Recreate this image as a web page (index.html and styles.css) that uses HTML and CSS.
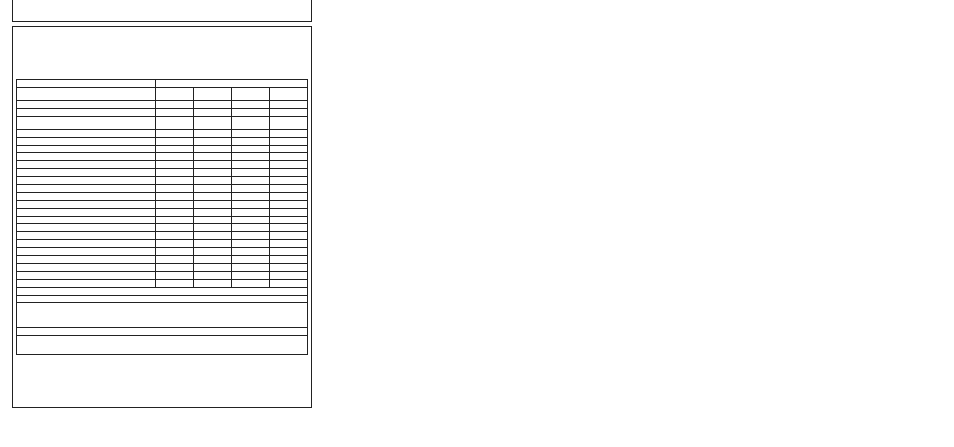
FILE: index.html
```html
<!DOCTYPE html>
<html lang="en">
<head>
<meta charset="utf-8">
<title>Form</title>
<link rel="stylesheet" href="styles.css">
</head>
<body>
<div class="page">
  <div class="box box-top"></div>
  <div class="box box-main">
    <table class="grid">
      <colgroup>
        <col class="c-label">
        <col class="c-val"><col class="c-val"><col class="c-val"><col class="c-val">
      </colgroup>
      <tr class="r-h1"><td></td><td colspan="4"></td></tr>
      <tr class="r-h2"><td></td><td></td><td></td><td></td><td></td></tr>
      <tr class="r-d"><td></td><td></td><td></td><td></td><td></td></tr>
      <tr class="r-d"><td></td><td></td><td></td><td></td><td></td></tr>
      <tr class="r-tall"><td></td><td></td><td></td><td></td><td></td></tr>
      <tr class="r-d"><td></td><td></td><td></td><td></td><td></td></tr>
      <tr class="r-d"><td></td><td></td><td></td><td></td><td></td></tr>
      <tr class="r-d"><td></td><td></td><td></td><td></td><td></td></tr>
      <tr class="r-d"><td></td><td></td><td></td><td></td><td></td></tr>
      <tr class="r-d"><td></td><td></td><td></td><td></td><td></td></tr>
      <tr class="r-d"><td></td><td></td><td></td><td></td><td></td></tr>
      <tr class="r-d"><td></td><td></td><td></td><td></td><td></td></tr>
      <tr class="r-d"><td></td><td></td><td></td><td></td><td></td></tr>
      <tr class="r-d"><td></td><td></td><td></td><td></td><td></td></tr>
      <tr class="r-d"><td></td><td></td><td></td><td></td><td></td></tr>
      <tr class="r-d"><td></td><td></td><td></td><td></td><td></td></tr>
      <tr class="r-d"><td></td><td></td><td></td><td></td><td></td></tr>
      <tr class="r-d"><td></td><td></td><td></td><td></td><td></td></tr>
      <tr class="r-d"><td></td><td></td><td></td><td></td><td></td></tr>
      <tr class="r-d"><td></td><td></td><td></td><td></td><td></td></tr>
      <tr class="r-d"><td></td><td></td><td></td><td></td><td></td></tr>
      <tr class="r-d"><td></td><td></td><td></td><td></td><td></td></tr>
      <tr class="r-d"><td></td><td></td><td></td><td></td><td></td></tr>
      <tr class="r-d"><td></td><td></td><td></td><td></td><td></td></tr>
      <tr class="r-d"><td></td><td></td><td></td><td></td><td></td></tr>
      <tr class="r-f1"><td colspan="5"></td></tr>
      <tr class="r-f2"><td colspan="5"></td></tr>
      <tr class="r-f3"><td colspan="5"></td></tr>
      <tr class="r-f1"><td colspan="5"></td></tr>
      <tr class="r-f4"><td colspan="5"></td></tr>
    </table>
  </div>
</div>
</body>
</html>
```
FILE: styles.css
```css
html, body {
  margin: 0;
  padding: 0;
  background: #fff;
  font-family: "Liberation Sans", Arial, sans-serif;
}

.page {
  padding-left: 12px;
}

.box {
  box-sizing: border-box;
  width: 300px;
  border: 1px solid #222;
}

.box-top {
  border-top: 0;
  height: 22px;
  margin-bottom: 4px;
}

.box-main {
  padding: 52px 3px;
}

.grid {
  border-collapse: collapse;
  table-layout: fixed;
  width: 292px;
}

.grid td {
  border: 1px solid #222;
  padding: 0;
}

.c-label { width: 139px; }
.c-val { width: 38px; }

.r-h1 td { height: 7px; }
.r-h2 td { height: 12.4px; }
.r-d td { height: 6.9px; }
.r-tall td { height: 11.6px; }
.r-f1 td { height: 7px; }
.r-f2 td { height: 6px; }
.r-f3 td { height: 24px; }
.r-f4 td { height: 18.7px; }
```
